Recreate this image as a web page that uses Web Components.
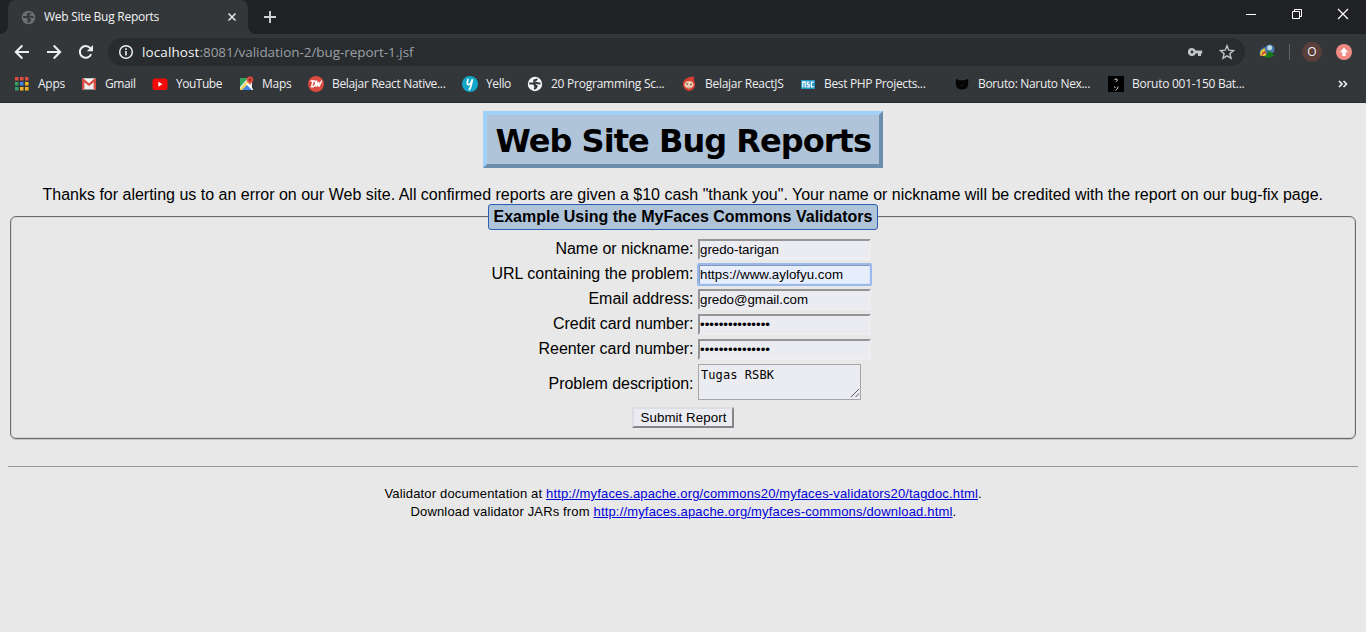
<!DOCTYPE html>
<html lang="en">
<head>
<meta charset="utf-8">
<title>Web Site Bug Reports</title>
<style>
html,body{margin:0;height:100%;overflow:hidden;background:#e8e8e8}
body{display:flex;flex-direction:column;font-family:"Liberation Sans",Arial,sans-serif;color:#000}
</style>
</head>
<body>
<browser-chrome></browser-chrome>
<report-page></report-page>
<script>
const UI='"Open Sans","Noto Sans",sans-serif';
function define(name,html,setup){
  customElements.define(name,class extends HTMLElement{
    connectedCallback(){
      if(this.shadowRoot)return;
      const t=document.createElement('template');
      t.innerHTML=typeof html==='function'?html(this):html;
      this.attachShadow({mode:'open'}).append(t.content.cloneNode(true));
      if(setup)setup(this);
    }
  });
}

/* A single line of text whose tracking is adjusted to fill the width in "w". */
define('line-text','<style>:host{display:block;white-space:nowrap;flex:none}span{display:inline-block;white-space:pre}:host([link]) span{text-decoration:underline}</style><span><slot></slot></span>',el=>{
  const w=+el.getAttribute('w'),s=el.shadowRoot.querySelector('span');
  el.style.width=w+'px';
  const n=el.textContent.length;
  s.style.letterSpacing=(w-s.getBoundingClientRect().width)/n+'px';
});

const globe='<circle cx="8" cy="8" r="7.200" fill="F"/><path d="M2.300 7.500h3c1.500 0 2.700.9 2.700 2.300h1.500c.3 1.600-.8 2.400-2.500 3M9.700 2.700c.2 1.300-.8 1.600-2.300 1.600-.7 1.300.2 2.500 1.600 2.500 1.500 0 2.300 1 4.500.7" fill="none" stroke="B" stroke-width="2"/>';
const icons={
  globe:globe.replace('F','#6d7073').replace('B','#34373a'),
  globeLight:globe.replace('F','#f5f6f7').replace('B','#303336'),
  apps:[['#e04b41','#e04b41','#e04b41'],['#35a265','#4385e8','#efb527'],['#35a265','#efb527','#efb527']].map((r,y)=>r.map((c,x)=>`<rect x="${1+x*5}" y="${1+y*5}" width="3.500" height="3.500" fill="${c}"/>`).join('')).join(''),
  gmail:'<path d="M1 2.500h14v11H1z" fill="#ececec"/><path d="M1 13.500v-11h1.500L8 7.300l5.500-4.800H15v11h-2.300V6.200L8 10 3.300 6.200v7.300z" fill="#d84b40"/><path d="M2.700 2.500h10.600L8 7z" fill="#f7f7f7"/>',
  youtube:'<rect x=".5" y="2.500" width="15" height="11.500" rx="2.500" fill="#f40a0a"/><path d="M6.300 5.700v5l4.200-2.500z" fill="#fff"/>',
  maps:'<path d="M2 2h12v12H2z" fill="#e9e9e5"/><path d="M2 2h8L2 11z" fill="#35a45c"/><path d="M2 14 9 7l6 7z" fill="#4385e8"/><path d="M2 13 11 3l2 2-9 9H2z" fill="#f3d252"/><path d="m8 8 6 6h1v-1L9.500 7z" fill="#fff"/><path d="M12 .5A3.300 3.300 0 0 0 8.700 4c0 2 3.100 3 3.300 5 .2-2 3.300-3 3.300-5A3.300 3.300 0 0 0 12 .5z" fill="#df4b3d"/><circle cx="12" cy="3.800" r="1.200" fill="#842a22"/>',
  dw:'<circle cx="8" cy="8" r="8" fill="#d94a42"/><path d="M2.500 5h4c1.500 0 1.300 1.800.9 3.200-.4 1.700-1.200 2.600-2.700 2.600H3.500L5 5.500M8.700 4.500l-.3 6.300L10.700 6l.2 4.800L13.800 4.500" fill="none" stroke="#fff" stroke-width="1.400"/>',
  yello:'<circle cx="8" cy="8" r="8" fill="#12a7c9"/><path d="M6 3.500C5.200 5.700 4.800 8.600 6.300 8.700 8 8.800 9.500 6 10.500 3.300 9.700 7 9 11.500 7.300 13.500" fill="none" stroke="#fff" stroke-width="1.700" stroke-linecap="round"/>',
  react:'<path d="M13.300.8C9 .5 3 2.300 2 7c-.6 3.600 2 7.500 6 8 4-.4 6.600-3.700 6-7.500-.3-2.500-1.500-3-1-4.500z" fill="#d73e31"/><ellipse cx="8" cy="8.600" rx="4.600" ry="3.700" fill="#eed0b5"/><path d="m4.500 7 2.500.5-.5 2zM11.500 7.500 9 8l.7 2z" fill="#8c4a3b"/><path d="M5.500 11.500h5L8 13.500z" fill="#c58d76"/>',
  nsc:'<path d="M1 4h14v9H1z" fill="#2197c4"/><path d="M2.800 11.500V6h2.400v5.500M9.500 6.200H7.300v2.300h1.900v2.300H6.500M13.700 6.200h-2.300v4.600h2.300" fill="none" stroke="#fff" stroke-width="1.300"/>',
  cat:'<path d="M2.300 2.800 5 4.300h6l2.700-1.500c.3 2 1 3 .3 5.700.1 3-2.500 5-6 5s-6.100-2-6-5c-.7-2.700 0-3.700.3-5.700z" fill="#050505"/><path d="m7.200 9 .8.700.8-.7z" fill="#666"/>',
  kana:'<path d="M0 0h16v16H0z" fill="#000"/><path d="M6.500 4c.4-1.500 2.700-1.500 2.900 0 .1 1-1.200 1.200-1.600 2M6.500 10.500l.8 1.500M10 10.500c-.2 2-1 3-2.500 3.800" fill="none" stroke="#ddd" stroke-width="1"/>',
  close:'<path d="m4 4 8 8M12 4l-8 8" stroke="#e8eaed" stroke-width="1.700"/>',
  plus:'<path d="M8 2v12M2 8h12" stroke="#d0d2d4" stroke-width="1.900"/>',
  back:'<path d="M15 8H2M8.300 1.500 1.800 8l6.500 6.500" fill="none" stroke="#eceef0" stroke-width="2"/>',
  forward:'<path d="M1 8h13M7.700 1.500 14.200 8l-6.500 6.500" fill="none" stroke="#eceef0" stroke-width="2"/>',
  reload:'<path d="M13.200 10.200A5.900 5.900 0 1 1 12.300 4.100" fill="none" stroke="#eceef0" stroke-width="2"/><path d="M15 1v6.200H8.800z" fill="#eceef0"/>',
  info:'<circle cx="8" cy="8" r="6.300" fill="none" stroke="#eceef0" stroke-width="1.500"/><path d="M8 7v4.500M8 4.300v1.600" stroke="#eceef0" stroke-width="1.600"/>',
  key:'<path d="M5 4a4 4 0 1 0 3.700 5.400H11V12h3V9.400h1.200V6.600H8.700A4 4 0 0 0 5 4zm0 2.600a1.400 1.400 0 1 1 0 2.800 1.400 1.400 0 0 1 0-2.800z" fill="#c3c6c9" fill-rule="evenodd"/>',
  star:'<path d="m8 1.800 1.800 4.400 4.700.4-3.600 3.100 1.100 4.600L8 11.800l-4 2.500 1.100-4.600-3.600-3.100 4.700-.4z" fill="none" stroke="#c3c6c9" stroke-width="1.400"/>',
  idm:'<path d="M1.500 12C-1 7 2 3 7 2.500l1 4-3 5z" fill="#35599b"/><path d="M1.500 12C0 7.500 3 4.500 7 4l1 3-3 4.500z" fill="#e2c63a"/><path d="M2.500 12c0-3.500 1.500-5 4.500-5v4z" fill="#c8502d"/><path d="M3.500 12c.3-1.600 1.500-2.800 4-2.800V12z" fill="#e8d23c"/><circle cx="10.700" cy="5.400" r="4.800" fill="#4878ad"/><circle cx="10.700" cy="3.700" r="2.500" fill="#c0dbe8"/><path d="M4 12.500 9 14l7-2.500-2.500-1V8.300L8 7l1.500 3z" fill="#157a1b"/>',
  update:'<circle cx="8" cy="8" r="8" fill="#ef8b83"/><path d="M8 3.700 3.800 8.200h2.500V12h3.400V8.200h2.500z" fill="#fff"/>',
  more:'<path d="m4 5 3 3-3 3M8.500 5l3 3-3 3" fill="none" stroke="#eceef0" stroke-width="1.700"/>',
  min:'<path d="M3 8.500h10" stroke="#fff"/>',
  restore:'<path d="M3.500 5.500h7v7h-7zM5.500 5V3.500h7v7H11" fill="none" stroke="#fff"/>',
  exit:'<path d="m3 3 10 10M13 3 3 13" stroke="#fff" stroke-width="1.200"/>'
};
define('ui-icon',el=>`<style>:host{display:block;flex:none}svg{display:block}</style><svg width="${el.getAttribute('size')||16}" height="${el.getAttribute('size')||16}" viewBox="0 0 16 16">${icons[el.getAttribute('name')]}</svg>`);

define('tab-strip',`<style>
:host{display:flex;height:34px;background:#202124;color:#f1f3f4;font:12px ${UI}}
.edge{width:8px;background:#34373a}.edge i{display:block;height:34px;background:#202124}
.l i{border-radius:0 0 8px 0}.r i{border-radius:0 0 0 8px}
.tab{box-sizing:border-box;width:240px;padding:0 9px 0 13px;background:#34373a;border-radius:8px 8px 0 0;display:flex;align-items:center}
line-text{margin:-1px 0 0 8px}.x{margin-left:auto}
.new{margin:9px 0 0 6px}.win{margin-left:auto;display:flex;gap:30px;padding:6px 15px 0 0}
</style><div class="edge l"><i></i></div><div class="tab"><ui-icon name="globe" size="15"></ui-icon><line-text w="115">Web Site Bug Reports</line-text><ui-icon class="x" name="close" size="14"></ui-icon></div><div class="edge r"><i></i></div>
<ui-icon class="new" name="plus"></ui-icon><div class="win"><ui-icon name="min"></ui-icon><ui-icon name="restore"></ui-icon><ui-icon name="exit"></ui-icon></div>`);

define('address-bar',`<style>
:host{display:flex;height:36px;background:#34373a;align-items:center;padding-left:14px;font:13.500px ${UI};color:#f1f3f4}
.nav{display:flex;gap:16px}.pill{box-sizing:border-box;margin-left:14px;width:1137px;height:28px;border-radius:14px;background:#292c2f;display:flex;align-items:center;padding:0 10px}
.url{display:flex;margin-left:8px}.path{color:#9aa0a6}.r{margin-left:auto;display:flex;gap:16px}
.idm{margin-left:14px}.sep{width:1px;height:16px;background:#606366;margin:0 12px 0 14px}
.me{width:20px;height:20px;border-radius:50%;background:#5a3f3b;font-size:12px;line-height:20px;text-align:center;margin-right:14px}
</style><div class="nav"><ui-icon name="back"></ui-icon><ui-icon name="forward"></ui-icon><ui-icon name="reload"></ui-icon></div>
<div class="pill"><ui-icon name="info"></ui-icon><div class="url"><line-text w="57.500">localhost</line-text><line-text class="path" w="214">:8081/validation-2/bug-report-1.jsf</line-text></div><div class="r"><ui-icon name="key"></ui-icon><ui-icon name="star"></ui-icon></div></div>
<ui-icon class="idm" name="idm"></ui-icon><div class="sep"></div><div class="me">O</div><ui-icon name="update"></ui-icon>`);

define('bookmark-item',el=>`<style>:host{display:flex;align-items:center;height:28px}div{margin:-1px 0 0 8px}</style><ui-icon name="${el.getAttribute('icon')}"></ui-icon><div><slot></slot></div>`);
const marks=[['apps','Apps',27,67],['gmail','Gmail',30.5,71],['youtube','YouTube',46,86],['maps','Maps',29.5,70],['dw','Belajar React Native...',113.5,154],['yello','Yello',25,65],['globeLight','20 Programming Sc...',113.5,154],['react','Belajar ReactJS',78.5,119],['nsc','Best PHP Projects...',101.5,154],['cat','Boruto: Naruto Nex...',112,154],['kana','Boruto 001-150 Bat...',112.5,154]];
define('bookmark-bar',`<style>:host{box-sizing:border-box;display:flex;height:33px;padding:0 15px 0 14px;background:#34373a;border-bottom:1px solid #292b2d;color:#eceef0;font:12px ${UI}}bookmark-item{flex:none}.more{margin:6px 0 0 auto}</style>${marks.map(m=>`<bookmark-item icon="${m[0]}" style="width:${m[3]}px"><line-text w="${m[2]}">${m[1]}</line-text></bookmark-item>`).join('')}<ui-icon class="more" name="more"></ui-icon>`);
define('browser-chrome','<style>:host{display:block;flex:none}</style><tab-strip></tab-strip><address-bar></address-bar><bookmark-bar></bookmark-bar>');

define('form-row',el=>`<style>:host{display:grid;grid-template-columns:681.500px 1fr;column-gap:4.500px;height:25px;align-items:center}
label{justify-self:end}
.box{box-sizing:border-box;width:173px;height:21px;margin-top:2px;padding:0;border:2px solid;border-color:#959598 #eeeef1 #eeeef1 #959598;background:#ebebf2;font-size:13.333px;line-height:18px}
:host([focused]) .box{background:#e6eefc;border-color:#8396ba #d8e5fa #d8e5fa #8396ba;outline:2px solid #9ab9ed;outline-offset:-1px;border-radius:1px}
:host([area]){height:43px}
:host([area]) label{margin-top:2px}
:host([area]) .box{width:163px;height:36px;margin-top:-1px;padding:1px 0 1px 2px;border:1px solid #a5a5a8;font:12px "DejaVu Sans Mono","Noto Sans Mono",monospace;line-height:18px;display:flex;justify-content:space-between}
svg{align-self:flex-end}
</style><label><line-text w="${el.getAttribute('lw')}">${el.getAttribute('label')}</line-text></label><div class="box" role="textbox"><slot></slot>${el.hasAttribute('area')?'<svg width="10" height="10"><path d="M1 9 9 1M5.500 9 9 5.500" stroke="#55555a"/></svg>':''}</div>`);

define('report-form',`<style>
:host{display:block;box-sizing:border-box;position:relative;margin:0 10px;width:1346px;height:223px;border:1px solid #6c6c6c;box-shadow:inset 0 0 0 1px #d5d5d5,0 1px #c4c4c4;border-radius:6px;padding:19px 1px 0;font-size:16px}
.legend{position:absolute;left:477px;top:-13px;box-sizing:border-box;width:390px;height:26px;border:1px solid #2c5db4;border-radius:3px;background:#b0c4d9;padding:0 4.500px;font-weight:bold;line-height:23px}
.submit{box-sizing:border-box;width:102px;height:21px;margin:3px 0 0 620px;border:2px solid;border-color:#dedee2 #858589 #858589 #dedee2;background:#ebebf2;font-size:13.333px;line-height:17px;padding-left:6.500px}
</style><div class="legend"><line-text w="379">Example Using the MyFaces Commons Validators</line-text></div>
<form-row label="Name or nickname:" lw="138"><line-text w="79">gredo-tarigan</line-text></form-row>
<form-row focused label="URL containing the problem:" lw="202"><line-text w="143">https://www.aylofyu.com</line-text></form-row>
<form-row label="Email address:" lw="105"><line-text w="108">gredo@gmail.com</line-text></form-row>
<form-row label="Credit card number:" lw="140.500"><line-text w="70">•••••••••••••••</line-text></form-row>
<form-row label="Reenter card number:" lw="155"><line-text w="70">•••••••••••••••</line-text></form-row>
<form-row area label="Problem description:" lw="145"><line-text w="73">Tugas RSBK</line-text></form-row>
<div class="submit"><line-text w="86">Submit Report</line-text></div>`);

define('report-page',`<style>
:host{display:block;padding-top:8px;font-size:16px}
.h1{box-sizing:border-box;width:400px;height:57px;margin:0 auto;border:4px solid;border-color:#a1d0f9 #6b8eac #6b8eac #a1d0f9;background:#b0c4d9;padding:0 8.500px;font:bold 32px/52px "DejaVu Sans",Verdana,sans-serif}
.intro{display:flex;margin:17px 0 0 42.500px;line-height:20px;height:31px}
hr{height:1px;border:0;background:#96999a;margin:27px 8px 18px}
.foot{font-size:13px;line-height:18px;display:flex}.a{margin-left:384.500px}.b{margin-left:410.500px}
.foot a{color:#0000d8}
</style><div class="h1"><line-text w="375.500">Web Site Bug Reports</line-text></div>
<div class="intro"><line-text w="1280.500">Thanks for alerting us to an error on our Web site. All confirmed reports are given a $10 cash "thank you". Your name or nickname will be credited with the report on our bug-fix page.</line-text></div>
<report-form></report-form><hr>
<div class="foot a"><line-text w="161.500">Validator documentation at </line-text><a><line-text link w="432">http://myfaces.apache.org/commons20/myfaces-validators20/tagdoc.html</line-text></a><line-text w="3">.</line-text></div>
<div class="foot b"><line-text w="183">Download validator JARs from </line-text><a><line-text link w="359">http://myfaces.apache.org/myfaces-commons/download.html</line-text></a><line-text w="3">.</line-text></div>`);
</script>
</body>
</html>
